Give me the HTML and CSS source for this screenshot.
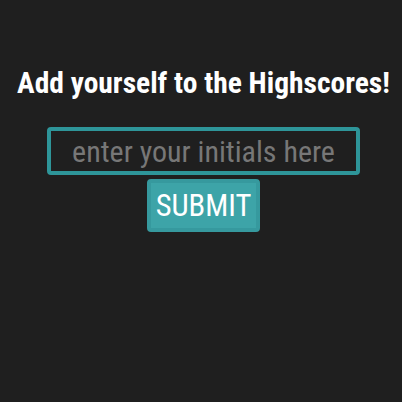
FILE: index.html
```html
<!DOCTYPE html>
<html>
<head>
<meta charset="utf-8">
<link rel="stylesheet" href="styles.css">
</head>
<body>
<main class="page">
  <h1 class="title">Add yourself to the Highscores!</h1>
  <form class="form">
    <input class="initials" type="text" placeholder="enter your initials here">
    <button class="submit" type="button">SUBMIT</button>
  </form>
</main>
</body>
</html>
```
FILE: styles.css
```css
html, body {
  margin: 0;
  padding: 0;
  background: #1f1f1f;
}
.page {
  box-sizing: border-box;
  width: 402px;
  height: 402px;
  padding-left: 5px;
  display: flex;
  flex-direction: column;
  align-items: center;
  font-family: "Roboto Condensed", Roboto, sans-serif;
}
.title {
  margin: 65px 0 0;
  font-size: 29.5px;
  font-weight: 700;
  color: #ffffff;
  line-height: 36px;
  white-space: nowrap;
}
.form {
  margin-top: 26px;
  display: flex;
  flex-direction: column;
  align-items: center;
  gap: 4px;
}
.initials {
  box-sizing: border-box;
  width: 313px;
  height: 48px;
  border: 4px solid #2e9599;
  border-radius: 4px;
  background: #1f1f1f;
  color: #dddddd;
  font-family: "Roboto Condensed", Roboto, sans-serif;
  font-size: 30px;
  text-align: center;
  padding: 0 4px;
  outline: none;
}
.initials::placeholder {
  color: #777777;
}
.submit {
  box-sizing: border-box;
  height: 53px;
  padding: 0 5px;
  border: 4px solid #36999e;
  border-radius: 4px;
  background: #3da4a8;
  color: #ffffff;
  font-family: "Roboto Condensed", Roboto, sans-serif;
  font-size: 30.5px;
}
```
